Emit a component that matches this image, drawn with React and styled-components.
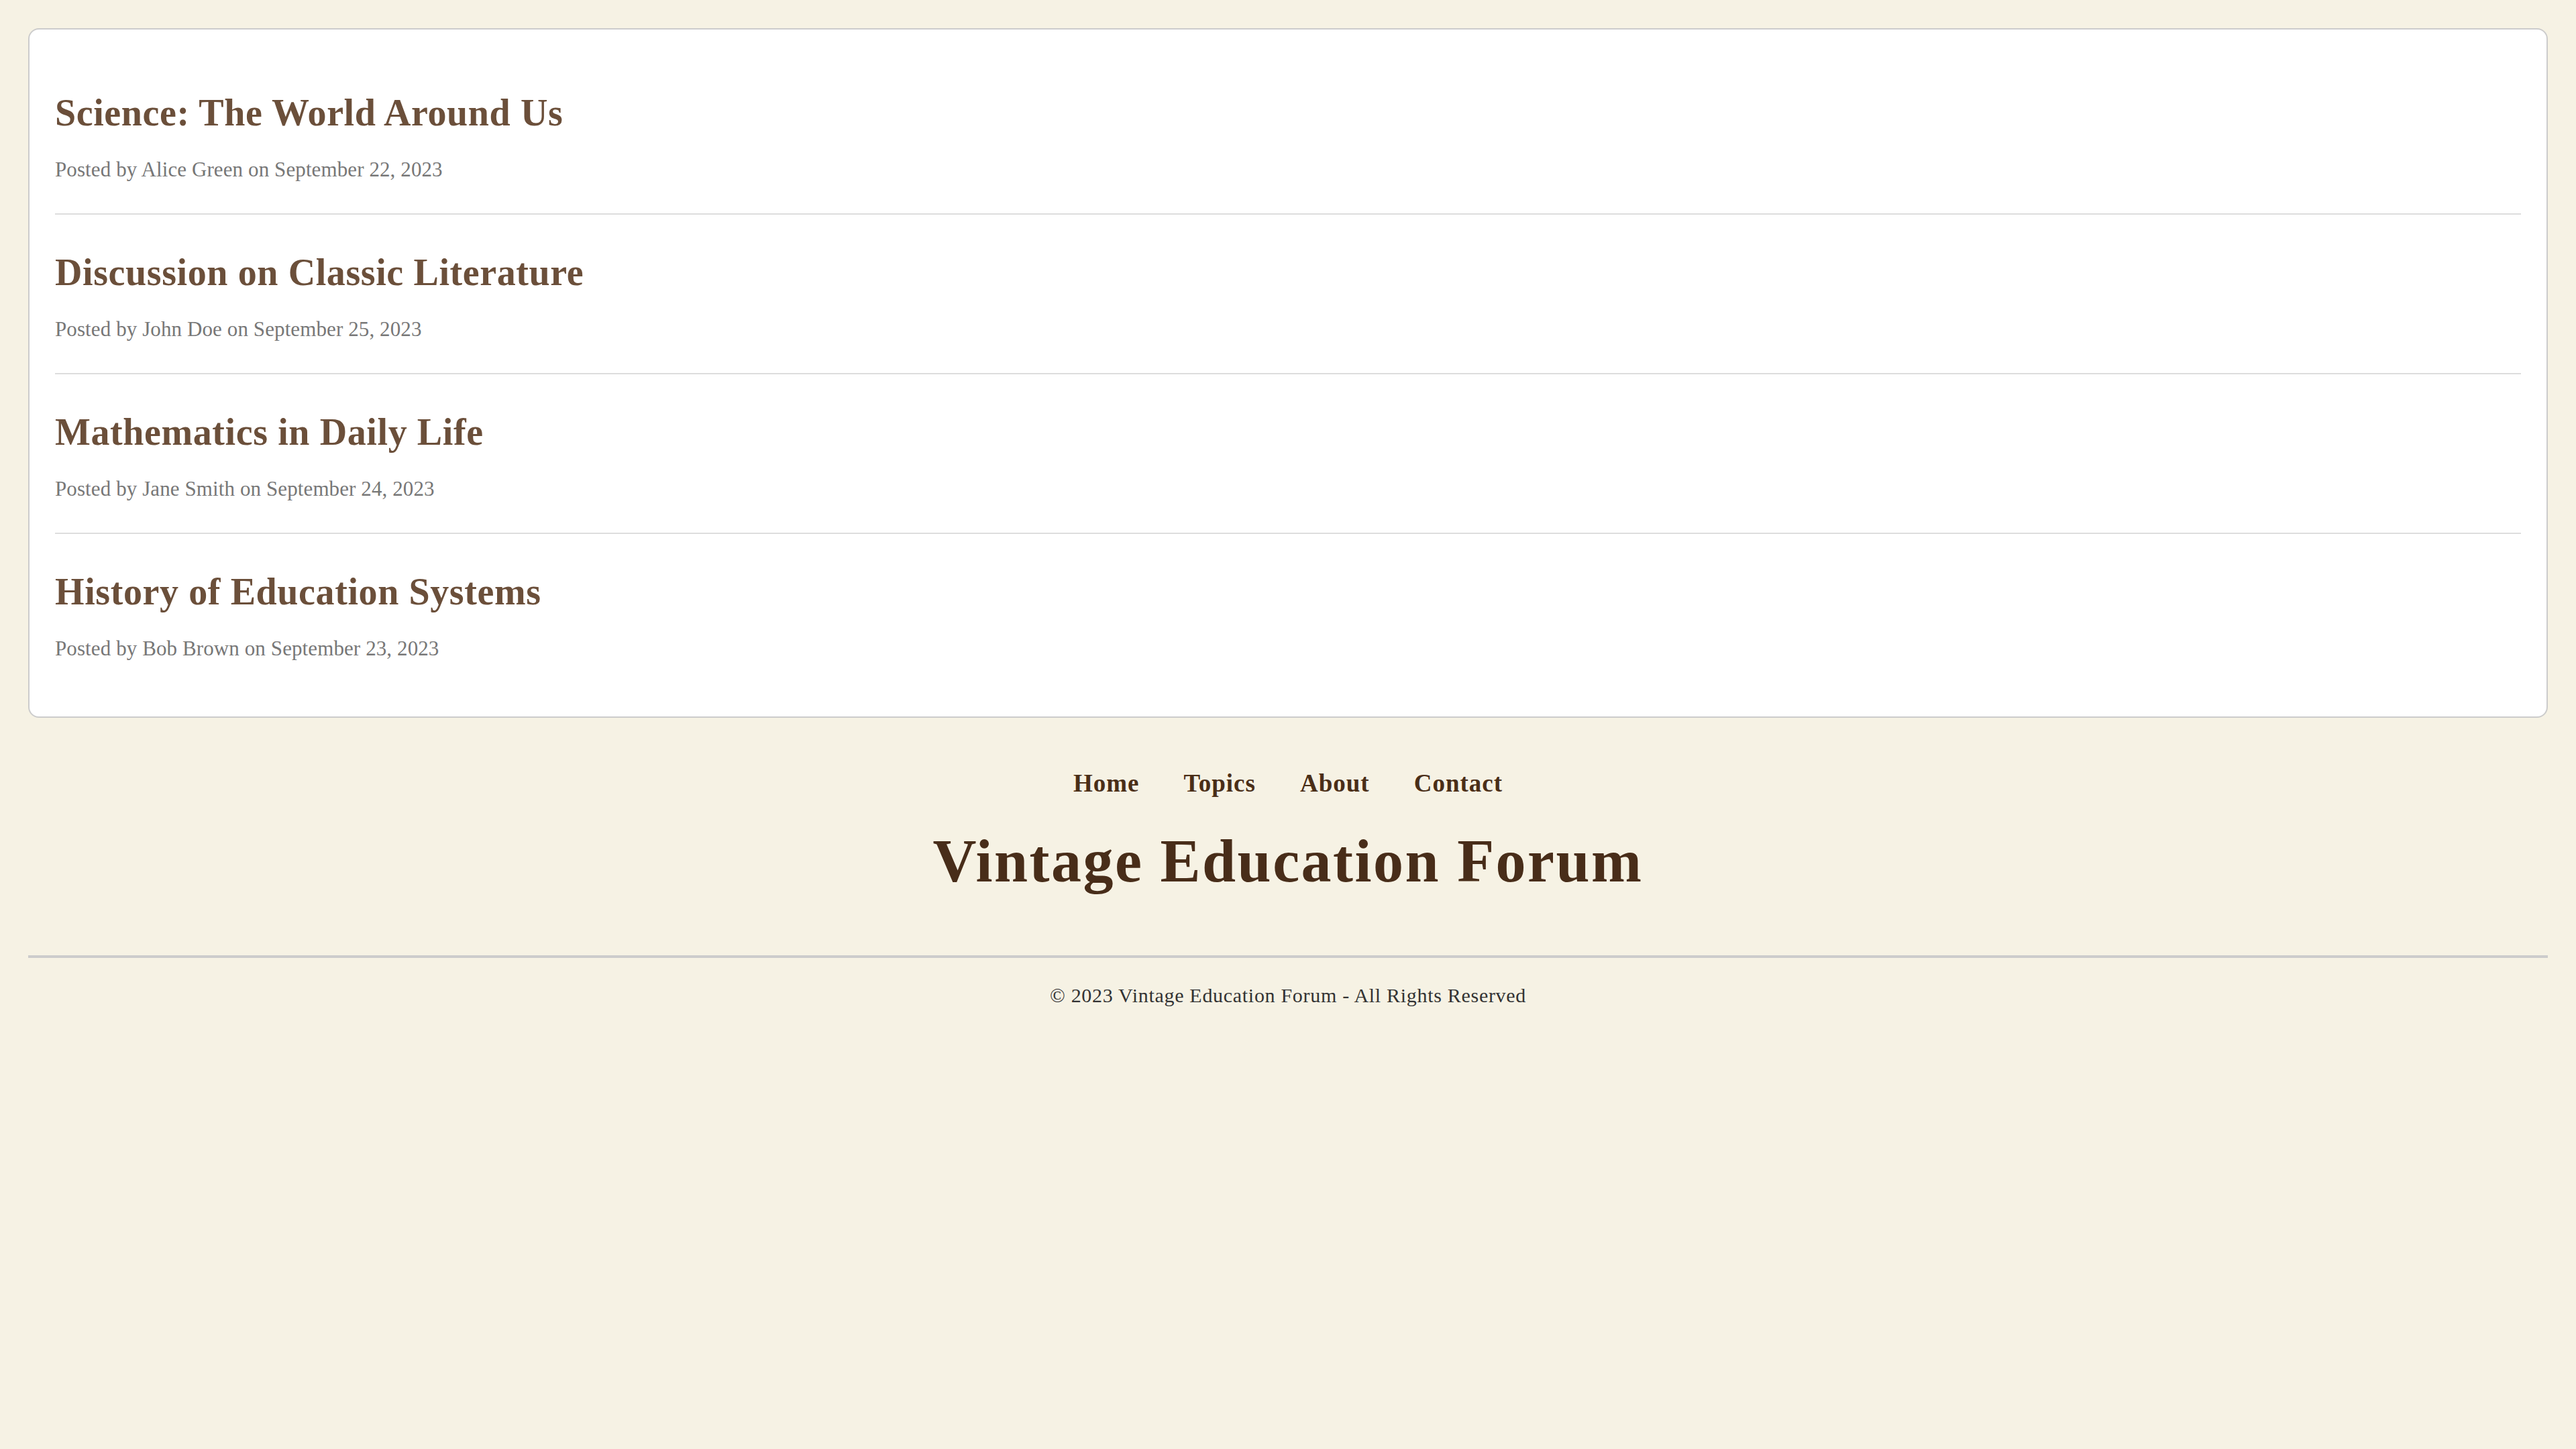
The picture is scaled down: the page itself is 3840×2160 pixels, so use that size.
import React from 'react';
import styled, { createGlobalStyle } from 'styled-components';

const posts = [
  { title: 'Science: The World Around Us', author: 'Alice Green', date: 'September 22, 2023' },
  { title: 'Discussion on Classic Literature', author: 'John Doe', date: 'September 25, 2023' },
  { title: 'Mathematics in Daily Life', author: 'Jane Smith', date: 'September 24, 2023' },
  { title: 'History of Education Systems', author: 'Bob Brown', date: 'September 23, 2023' },
];

const links = ['Home', 'Topics', 'About', 'Contact'];

function App() {
  return (
    <>
      <GlobalStyle />
      <Page>
        <PostList>
          {posts.map((post) => (
            <Post key={post.title}>
              <PostTitle>{post.title}</PostTitle>
              <PostMeta>
                Posted by {post.author} on {post.date}
              </PostMeta>
            </Post>
          ))}
        </PostList>

        <Masthead>
          <Nav>
            {links.map((link) => (
              <NavLink key={link} href="#">
                {link}
              </NavLink>
            ))}
          </Nav>
          <SiteTitle>Vintage Education Forum</SiteTitle>
        </Masthead>

        <Footer>
          <Copyright>© 2023 Vintage Education Forum - All Rights Reserved</Copyright>
        </Footer>
      </Page>
    </>
  );
}

const GlobalStyle = createGlobalStyle`
  html, body {
    margin: 0;
    background: #f6f2e4;
    font-family: Georgia, 'Liberation Serif', serif;
  }
`;

const Page = styled.div`
  padding: 42px;
  min-height: 2160px;
  box-sizing: border-box;
`;

const PostList = styled.section`
  background: #fff;
  border: 2px solid #ccc;
  border-radius: 16px;
  padding: 38px 38px 36px;
`;

const Post = styled.article`
  padding: 54px 0 45px;
  border-bottom: 2px solid #ddd;

  &:last-child {
    border-bottom: none;
  }
`;

const PostTitle = styled.h2`
  margin: 0 0 33px;
  font-size: 56px;
  line-height: 64px;
  letter-spacing: 0.6px;
  font-weight: bold;
  color: #6b4f3a;
`;

const PostMeta = styled.p`
  margin: 0;
  font-size: 31px;
  line-height: 40px;
  letter-spacing: 0.1px;
  color: #777;
`;

const Masthead = styled.header`
  display: flex;
  flex-direction: column;
  align-items: center;
  gap: 44px;
  padding-top: 76px;
`;

const Nav = styled.nav`
  display: flex;
  gap: 66px;
`;

const NavLink = styled.a`
  font-size: 37px;
  line-height: 44px;
  letter-spacing: 1px;
  font-weight: bold;
  color: #4a2e17;
  text-decoration: none;
`;

const SiteTitle = styled.h1`
  margin: 0;
  font-size: 90px;
  line-height: 100px;
  letter-spacing: 2.5px;
  font-weight: bold;
  color: #482d19;
`;

const Footer = styled.footer`
  margin-top: 90px;
  border-top: 4px solid #ccc;
  padding-top: 38px;
  text-align: center;
`;

const Copyright = styled.p`
  margin: 0;
  font-size: 30px;
  line-height: 36px;
  letter-spacing: 0.7px;
  color: #333;
`;

export default App;
